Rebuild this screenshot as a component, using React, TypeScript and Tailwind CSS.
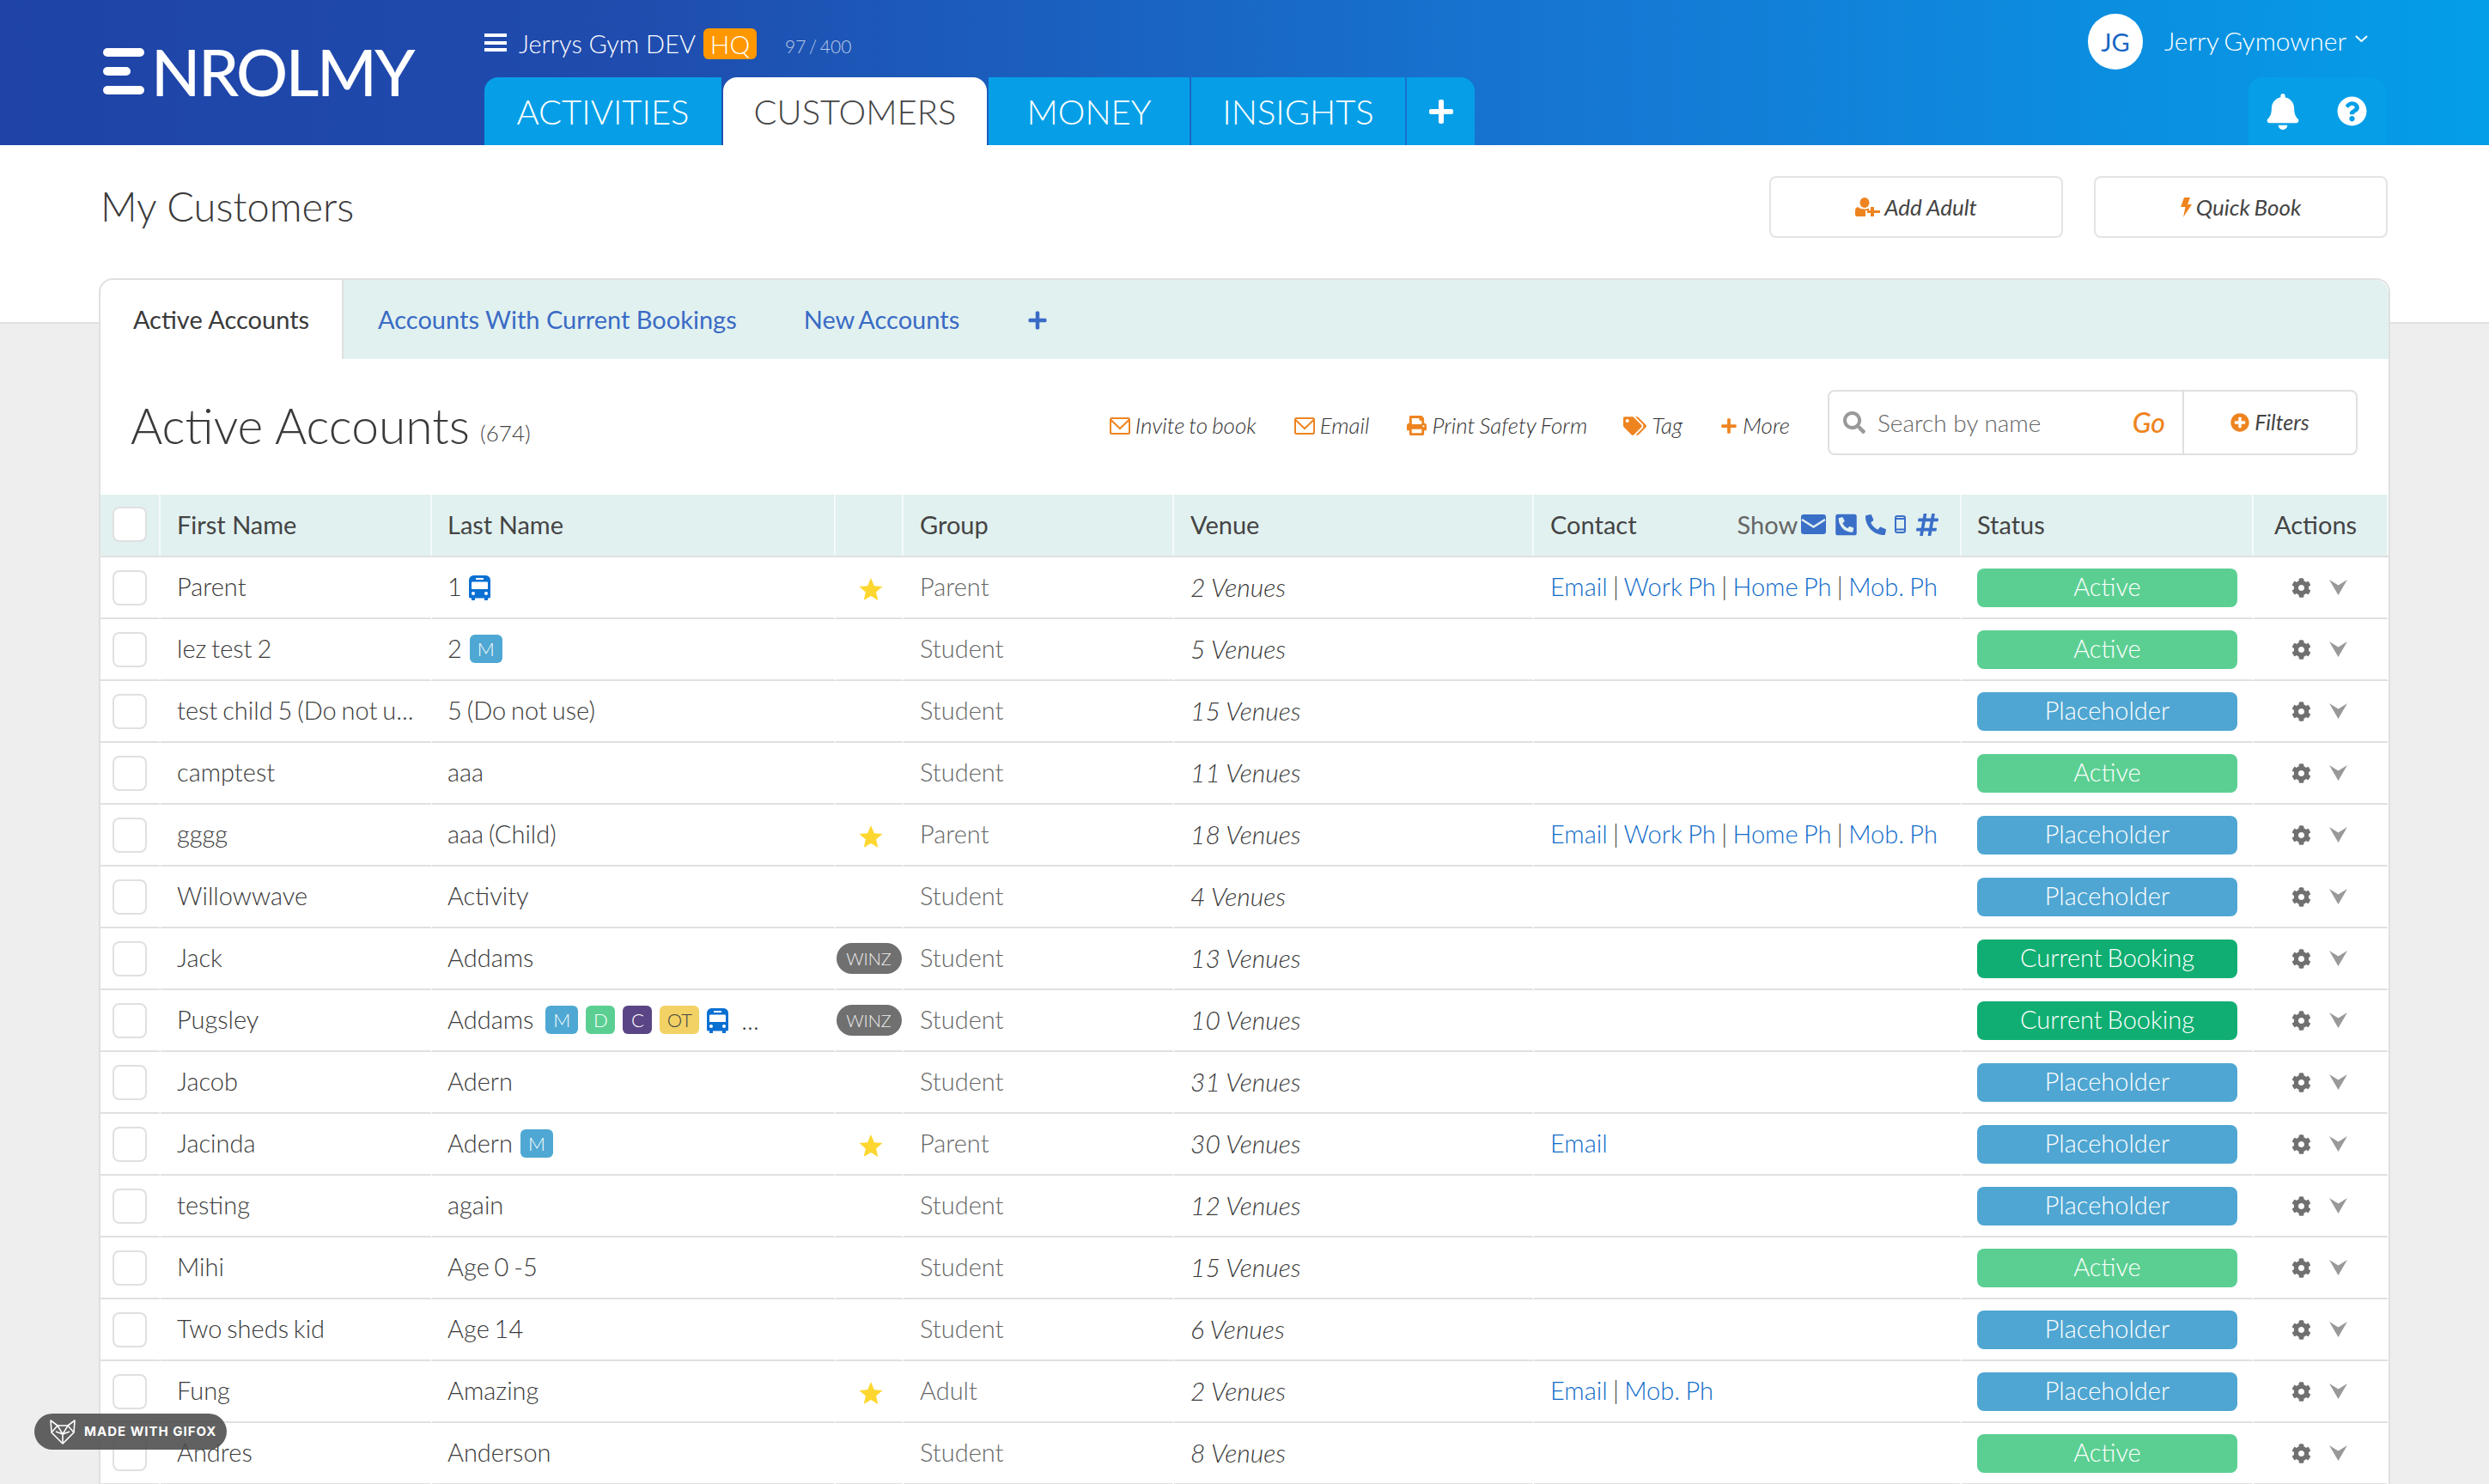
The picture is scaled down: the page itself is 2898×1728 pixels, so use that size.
import { FaBell, FaCog, FaHashtag, FaPhoneAlt, FaPhoneSquareAlt, FaPlus, FaPlusCircle, FaPrint, FaQuestionCircle, FaSearch, FaTags } from "react-icons/fa";

type Badge = "M" | "D" | "C" | "OT";
type Status = "Active" | "Placeholder" | "Current Booking";

type Customer = {
  first: string;
  last: string;
  badges?: Badge[];
  bus?: boolean;
  more?: boolean;
  star?: boolean;
  winz?: boolean;
  group: string;
  venues: number;
  contact?: string[];
  status: Status;
};

const customers: Customer[] = [
  { first: "Parent", last: "1", bus: true, star: true, group: "Parent", venues: 2, contact: ["Email", "Work Ph", "Home Ph", "Mob. Ph"], status: "Active" },
  { first: "lez test 2", last: "2", badges: ["M"], group: "Student", venues: 5, status: "Active" },
  { first: "test child 5 (Do not u...", last: "5 (Do not use)", group: "Student", venues: 15, status: "Placeholder" },
  { first: "camptest", last: "aaa", group: "Student", venues: 11, status: "Active" },
  { first: "gggg", last: "aaa (Child)", star: true, group: "Parent", venues: 18, contact: ["Email", "Work Ph", "Home Ph", "Mob. Ph"], status: "Placeholder" },
  { first: "Willowwave", last: "Activity", group: "Student", venues: 4, status: "Placeholder" },
  { first: "Jack", last: "Addams", winz: true, group: "Student", venues: 13, status: "Current Booking" },
  { first: "Pugsley", last: "Addams", badges: ["M", "D", "C", "OT"], bus: true, more: true, winz: true, group: "Student", venues: 10, status: "Current Booking" },
  { first: "Jacob", last: "Adern", group: "Student", venues: 31, status: "Placeholder" },
  { first: "Jacinda", last: "Adern", badges: ["M"], star: true, group: "Parent", venues: 30, contact: ["Email"], status: "Placeholder" },
  { first: "testing", last: "again", group: "Student", venues: 12, status: "Placeholder" },
  { first: "Mihi", last: "Age 0 -5", group: "Student", venues: 15, status: "Active" },
  { first: "Two sheds kid", last: "Age 14", group: "Student", venues: 6, status: "Placeholder" },
  { first: "Fung", last: "Amazing", star: true, group: "Adult", venues: 2, contact: ["Email", "Mob. Ph"], status: "Placeholder" },
  { first: "Andres", last: "Anderson", group: "Student", venues: 8, status: "Active" },
];

const badgeStyles: Record<Badge, string> = {
  M: "w-[38px] bg-[#4fa8d3] text-white",
  D: "w-[34px] bg-[#5bcf92] text-white",
  C: "w-[34px] bg-[#5a4686] text-white",
  OT: "w-[46px] bg-[#f2d264] text-[#444]",
};

const statusStyles: Record<Status, string> = {
  Active: "bg-[#5bcf92]",
  Placeholder: "bg-[#4fa6d2]",
  "Current Booking": "bg-[#10ae72]",
};

const gridCols = "grid grid-cols-[70px_316px_470px_79px_315px_419px_498px_340px_157px]";

const Envelope = () => (
  <svg viewBox="0 0 24 20" className="h-[20px] w-[24px] fill-none stroke-[#ee8420] stroke-2">
    <rect x="1" y="1" width="22" height="18" rx="1.5" />
    <path d="M1.5 3 L12 13 L22.5 3" />
  </svg>
);

const UserAdd = () => (
  <svg viewBox="0 0 29 22" className="h-[22px] w-[29px] fill-[#ee8420]">
    <ellipse cx="11" cy="6" rx="5.5" ry="6" />
    <path d="M3 11 Q6 13.5 11 13.5 Q14 13.5 16 12.5 V15 H12 V22 H2 Q0 22 0 20 V15 Q0 12 3 11 Z" />
    <path d="M18 11 H22 V15 H29 V18 H22 V22 H18 V18 H14 V15 H18 Z" />
  </svg>
);

const Bolt = () => (
  <svg viewBox="0 0 13 23" className="h-[23px] w-[13px] fill-[#ee8420]">
    <path d="M4 0 H11 L8 8 H13 L3 23 L5.5 11 H0 Z" />
  </svg>
);

const EnvelopeFilled = () => (
  <svg viewBox="0 0 29 23" className="h-[23px] w-[29px]">
    <rect width="29" height="23" rx="3" fill="#3a6fc8" />
    <path d="M1 6 L14.5 14.5 L28 6" fill="none" stroke="#e1f1f0" strokeWidth="2.4" />
  </svg>
);

const MobileOutline = () => (
  <svg viewBox="0 0 13 21" className="h-[21px] w-[13px] fill-none stroke-[#3a6fc8] stroke-2">
    <rect x="1" y="1" width="11" height="19" rx="2" />
    <path d="M1 4 H12 M1 16.5 H12" />
  </svg>
);

const Bus = () => (
  <svg viewBox="0 0 25 29" className="h-[29px] w-[25px] fill-[#0a70d2]">
    <path d="M3 26 H7 V29 H3 Z M18 26 H22 V29 H18 Z" />
    <path d="M5 0 H20 Q25 1 25 6 V25 Q25 26.5 23 26.5 H2 Q0 26.5 0 25 V6 Q0 1 5 0 Z" />
    <path d="M8 3 H17 V5 H8 Z" fill="#ffffff" />
    <path d="M4 7.5 H21 Q22 7.5 22 8.5 V16 H3 V8.5 Q3 7.5 4 7.5 Z" fill="#ffffff" />
    <circle cx="5" cy="21" r="2" fill="#ffffff" />
    <circle cx="20" cy="21" r="2" fill="#ffffff" />
  </svg>
);

const Star = () => (
  <svg viewBox="0 0 28 28" className="h-[28px] w-[28px] translate-x-[2px] translate-y-[2px] fill-[#fdd72f]">
    <path d="M14 1 L17.8 10.2 L27.5 11 L20.1 17.4 L22.3 27 L14 21.9 L5.7 27 L7.9 17.4 L0.5 11 L10.2 10.2 Z" />
  </svg>
);

const ChevronArrow = () => (
  <svg viewBox="0 0 21 18" className="h-[18px] w-[21px] fill-[#999]">
    <path d="M0 0 L10.5 6.5 L21 0 L10.5 18 Z" />
  </svg>
);

const FoxMark = () => (
  <svg viewBox="0 0 30 30" className="h-[30px] w-[30px] fill-none stroke-white stroke-[1.6]">
    <path d="M1 2 L9 8 H21 L29 2 L28 16 L15 29 L2 16 Z" strokeLinejoin="round" />
    <path d="M2 16 L9 8 L15 18 L21 8 L28 16 M15 18 V29 M7 15 L15 18 L23 15" />
  </svg>
);

const ToolbarAction = ({ icon, label, className }: { icon: React.ReactNode; label: string; className: string }) => (
  <div className={`flex items-center gap-[6px] ${className}`}>
    {icon}
    <span className="text-[26px] font-light italic text-[#333] [word-spacing:-1.5px]">{label}</span>
  </div>
);

const HeaderCell = ({ children, className = "" }: { children?: React.ReactNode; className?: string }) => (
  <div className={`flex items-center border-r-2 border-r-[#f4fafa] pb-[2px] text-[29px] text-[#444] ${className}`}>{children}</div>
);

const Row = ({ c }: { c: Customer }) => {
  const cell = "flex h-[72px] items-center border-b-2 border-r-2 border-b-[#e0e0e0] border-r-white";
  return (
    <div className={`${gridCols} text-[29px] font-light text-[#3a3a3a] [word-spacing:-2px]`}>
      <div className={`${cell} pl-[14px]`}>
        <div className="h-[41px] w-[40px] rounded-lg border-2 border-[#e0e0e0] bg-white" />
      </div>
      <div className={`${cell} whitespace-nowrap pb-[2px] pl-[19px]`}>{c.first}</div>
      <div className={`${cell} whitespace-nowrap pl-[18px]`}>
        <span className="pb-[2px]">{c.last}</span>
        {c.badges?.map((b, i) => (
          <span
            key={b}
            className={`flex h-[33px] -translate-y-[1px] items-center justify-center rounded-md text-[22px] ${i === 0 && c.more ? "ml-[14px]" : "ml-[9px]"} ${badgeStyles[b]}`}
          >
            {b}
          </span>
        ))}
        {c.bus && (
          <span className={c.more ? "ml-[9px]" : "ml-[8px]"}>
            <Bus />
          </span>
        )}
        {c.more && <span className="ml-[15px]">...</span>}
      </div>
      <div className={`${cell} justify-center`}>
        {c.star && <Star />}
        {c.winz && (
          <span className="flex h-[36px] w-[76px] items-center justify-center rounded-full bg-[#707070] text-[20px] text-[#eee]">WINZ</span>
        )}
      </div>
      <div className={`${cell} pb-[2px] pl-[19px] text-[#666]`}>{c.group}</div>
      <div className={`${cell} pb-[2px] pl-[19px] text-[30px] italic [word-spacing:0px]`}>{c.venues} Venues</div>
      <div className={`${cell} pb-[2px] pl-[19px] [word-spacing:-1.5px]`}>
        {c.contact?.map((link, i) => (
          <span key={link} className="whitespace-pre">
            {i > 0 && " | "}
            <span className="text-[#0f6cc9]">{link}</span>
          </span>
        ))}
      </div>
      <div className={`${cell} pl-[18px]`}>
        <div className={`flex h-[45px] w-[303px] items-center justify-center rounded-lg pb-[2px] text-white ${statusStyles[c.status]}`}>{c.status}</div>
      </div>
      <div className={`${cell} border-r-0 pl-[44px]`}>
        <FaCog className="h-[23px] w-[23px] text-[#707070]" />
        <span className="ml-[21px]">
          <ChevronArrow />
        </span>
      </div>
    </div>
  );
};

export default function App() {
  return (
    <div className="relative h-[1728px] overflow-hidden bg-[#eeeeee] [font-family:Lato,sans-serif]">
      <header className="flex h-[169px] bg-[linear-gradient(to_right,#1f43a7_0%,#1f4cae_25%,#1579d4_65%,#049ee8_100%)] text-white">
        <div className="flex w-[564px] shrink-0 pl-[120px] pt-[42px]">
          <div className="flex h-[82px] items-center">
            <div className="flex h-[54px] w-[48px] flex-col justify-between">
              <span className="h-[10px] w-[48px] rounded-full bg-white" />
              <span className="h-[10px] w-[32px] rounded-full bg-white" />
              <span className="h-[10px] w-[48px] rounded-full bg-white" />
            </div>
            <span className="ml-[8px] text-[75px] font-medium leading-none tracking-[-2.5px]">NROLMY</span>
          </div>
        </div>

        <div className="flex flex-col">
          <div className="flex h-[90px] items-start pt-[33px]">
            <div className="mt-[6px] flex h-[21px] w-[26px] flex-col justify-between">
              <span className="h-[4px] bg-white" />
              <span className="h-[4px] bg-white" />
              <span className="h-[4px] bg-white" />
            </div>
            <span className="ml-[14px] text-[29px] font-light leading-[36px]">Jerrys Gym DEV</span>
            <span className="ml-[9px] flex h-[36px] w-[62px] items-center justify-center rounded-md bg-[#ff9800] text-[30px] font-light">HQ</span>
            <span className="ml-[33px] mt-[5px] text-[21px] font-light text-white/70 [word-spacing:-2px]">97 / 400</span>
          </div>
          <nav className="flex h-[79px] gap-[2px] text-[40px] font-light">
            <div className="flex w-[276px] items-center justify-center rounded-tl-2xl bg-[#069fe7]">ACTIVITIES</div>
            <div className="flex w-[307px] items-center justify-center rounded-t-2xl bg-white text-[#444]">CUSTOMERS</div>
            <div className="flex w-[234px] items-center justify-center bg-[#069fe7]">MONEY</div>
            <div className="flex w-[249px] items-center justify-center bg-[#069fe7]">INSIGHTS</div>
            <div className="flex w-[79px] items-center justify-center rounded-tr-2xl bg-[#069fe7]">
              <FaPlus className="h-[32px] w-[32px]" />
            </div>
          </nav>
        </div>

        <div className="ml-auto flex w-[480px] shrink-0 flex-col">
          <div className="flex h-[90px] items-start pl-[13px] pt-[16px]">
            <div className="flex h-[65px] w-[64px] items-center justify-center rounded-full bg-white text-[29px] text-[#1a66c4]">JG</div>
            <span className="ml-[25px] mt-[13px] text-[30px] font-light leading-[36px] [word-spacing:-2px]">Jerry Gymowner</span>
            <svg viewBox="0 0 15 8" className="ml-[10px] mt-[25px] h-[8px] w-[15px] fill-none stroke-white stroke-2">
              <path d="M1 1 L7.5 7 L14 1" />
            </svg>
          </div>
          <div className="ml-[200px] flex h-[79px] w-[160px] items-center rounded-t-2xl bg-[#069fe7]">
            <div className="flex w-[80px] justify-center">
              <FaBell className="h-[42px] w-[38px]" />
            </div>
            <div className="flex w-[80px] justify-center">
              <FaQuestionCircle className="h-[35px] w-[35px]" />
            </div>
          </div>
        </div>
      </header>

      <div className="flex h-[208px] items-start justify-between border-b-2 border-[#e0e0e0] bg-white pl-[117px] pr-[118px] pt-[35px]">
        <h1 className="text-[47px] font-light leading-[72px] text-[#3a3a3a]">My Customers</h1>
        <div className="mt-[1px] flex gap-[36px]">
          <button className="flex h-[72px] w-[342px] items-center justify-center gap-[5px] rounded-lg border-2 border-[#e4e4e6] text-[26px] italic text-[#444]">
            <UserAdd />
            Add Adult
          </button>
          <button className="flex h-[72px] w-[342px] items-center justify-center gap-[5px] rounded-lg border-2 border-[#e4e4e6] text-[26px] italic text-[#444] [word-spacing:-1.5px]">
            <Bolt />
            Quick Book
          </button>
        </div>
      </div>

      <main className="relative -mt-[53px] ml-[115px] w-[2668px] rounded-t-2xl border-2 border-[#e0e0e0] bg-white">
        <div className="flex h-[92px] items-center rounded-t-2xl bg-[#e1f1f0] text-[29px] text-[#3a6bc5]">
          <div className="flex h-full w-[283px] items-center justify-center rounded-tl-2xl border-r-2 border-[#e0e0e0] bg-white text-[#3a3a3a]">Active Accounts</div>
          <span className="ml-[40px]">Accounts With Current Bookings</span>
          <span className="ml-[78px] [word-spacing:-2px]">New Accounts</span>
          <FaPlus className="ml-[79px] mt-[2px] h-[24px] w-[24px] text-[#3a6bc5]" />
        </div>

        <div className="flex h-[158px] items-center pb-[3px] pl-[35px]">
          <h2 className="text-[57px] font-light text-[#3a3a3a]">Active Accounts</h2>
          <span className="ml-[12px] mt-[18px] text-[26px] font-light text-[#444]">(674)</span>
          <div className="ml-auto flex items-center">
            <ToolbarAction icon={<Envelope />} label="Invite to book" className="" />
            <ToolbarAction icon={<Envelope />} label="Email" className="ml-[44px]" />
            <ToolbarAction icon={<FaPrint className="h-[23px] w-[23px] text-[#ee8420]" />} label="Print Safety Form" className="ml-[44px]" />
            <ToolbarAction icon={<FaTags className="h-[24px] w-[27px] text-[#ee8420]" />} label="Tag" className="ml-[42px]" />
            <ToolbarAction icon={<FaPlus className="h-[20px] w-[20px] text-[#ee8420]" />} label="More" className="ml-[44px]" />
            <div className="mb-[7px] ml-[44px] mr-[36px] flex h-[76px] w-[617px] items-center rounded-lg border-2 border-[#e0e0e0]">
              <FaSearch className="ml-[16px] h-[26px] w-[26px] text-[#999]" />
              <span className="ml-[14px] text-[28px] font-light text-[#666]">Search by name</span>
              <span className="ml-auto mr-[20px] text-[32px] font-medium italic text-[#ee8420]">Go</span>
              <div className="flex h-full w-[202px] items-center justify-center gap-[6px] border-l-2 border-[#e0e0e0] text-[25px] italic text-[#444]">
                <FaPlusCircle className="h-[22px] w-[22px] text-[#ee8420]" />
                Filters
              </div>
            </div>
          </div>
        </div>

        <div className={`${gridCols} h-[73px] border-b-2 border-[#e0e0e0] bg-[#e1f1f0]`}>
          <HeaderCell className="pb-0 pl-[14px]">
            <div className="h-[41px] w-[40px] rounded-lg border-2 border-[#e0e0e0] bg-white" />
          </HeaderCell>
          <HeaderCell className="pl-[19px]">First Name</HeaderCell>
          <HeaderCell className="pl-[18px]">Last Name</HeaderCell>
          <HeaderCell />
          <HeaderCell className="pl-[19px]">Group</HeaderCell>
          <HeaderCell className="pl-[19px]">Venue</HeaderCell>
          <HeaderCell className="pl-[19px]">
            Contact
            <span className="ml-[117px] text-[#666]">Show</span>
            <span className="ml-[4px] flex items-center text-[#3a6fc8]">
              <EnvelopeFilled />
              <FaPhoneSquareAlt className="ml-[11px] h-[28px] w-[25px]" />
              <FaPhoneAlt className="ml-[10px] h-[24px] w-[24px]" />
              <span className="ml-[10px]">
                <MobileOutline />
              </span>
              <FaHashtag className="ml-[12px] h-[30px] w-[26px]" />
            </span>
          </HeaderCell>
          <HeaderCell className="pl-[18px]">Status</HeaderCell>
          <HeaderCell className="border-r-0 pl-[24px]">Actions</HeaderCell>
        </div>

        {customers.map((c) => (
          <Row key={`${c.first}-${c.last}`} c={c} />
        ))}
      </main>

      <div className="absolute left-[40px] top-[1646px] flex h-[42px] w-[224px] items-center gap-[10px] rounded-full bg-[#505050]/90 pl-[18px] text-[15px] font-bold tracking-[1px] text-white [font-family:Inter,sans-serif]">
        <FoxMark />
        MADE WITH GIFOX
      </div>
    </div>
  );
}
